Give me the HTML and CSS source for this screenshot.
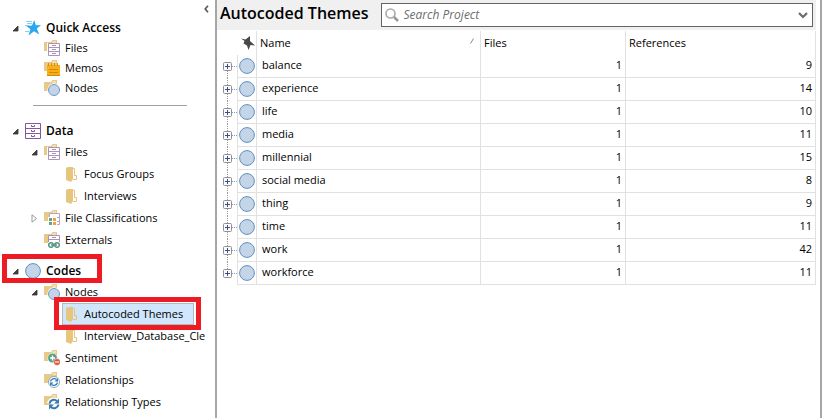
FILE: index.html
```
<!DOCTYPE html>
<html lang="en">
<head>
<meta charset="utf-8">
<title>Autocoded Themes</title>
<link rel="stylesheet" href="styles.css">
</head>
<body>
<svg class="symbols" aria-hidden="true">
  <symbol id="open" viewBox="0 0 7 7"><path d="M6 1V6H1Z" fill="#404040" stroke="#333" stroke-width=".8"/></symbol>
  <symbol id="closed" viewBox="0 0 7 9"><path d="M1 .8V8.2L5.5 4.5Z" fill="#fff" stroke="#999"/></symbol>
  <symbol id="star" viewBox="0 0 16 16"><path d="M9.2 0L10.8 5.2L16 5L11.8 8.6L14.2 14.5L9 11.2L3.5 15.5L5.4 9.2L1.5 6L7 5.4Z" fill="#29a8ef"/><path d="M1 1.5H7M2 3.5H7M0 5.5H4M0 11.5H4" stroke="#8bcdf3"/></symbol>
  <symbol id="back" viewBox="0 0 16 16"><path d="M0 2H7L8.500 0H13V11H0Z" fill="#e9c987"/><path d="M8.500 2H12" stroke="#fff5df"/></symbol>
  <symbol id="files" viewBox="0 0 16 16"><use href="#back"/><path d="M3 3H5V16H3Z" fill="#fff"/><path d="M4.500 3.500H15.500V15.500H4.500ZM4.500 7.500H15.500M4.500 11.500H15.500" fill="#fff" stroke="#a992b9"/><path d="M8 5.500H12M8 9.500H12M8 13.500H12" stroke="#a992b9"/></symbol>
  <symbol id="memos" viewBox="0 0 16 16"><use href="#back"/><path d="M3 5H16V15.500H3Z" fill="#f9ad16"/><path d="M4.500 3V6M7.500 3V6M10.500 3V6M13.500 3V6" stroke="#d98c05"/><path d="M5 9.500H14M5 12.500H14M3 15.500H16" stroke="#cf8a08"/></symbol>
  <symbol id="nodes" viewBox="0 0 16 16"><use href="#back"/><circle cx="10" cy="10" r="6.700" fill="#fff"/><circle cx="10" cy="10" r="5.500" fill="#c5d5e8" stroke="#6e9bc7"/></symbol>
  <symbol id="data" viewBox="0 0 16 16"><path d="M.5 .5H15.500V15.500H.5ZM.5 5.500H15.500M.5 10.500H15.500" fill="#fff" stroke="#8158a0"/><path d="M6.500 2V3.500H9.500V2M6.500 7V8.500H9.500V7M6.500 12V13.500H9.500V12" fill="none" stroke="#8158a0"/></symbol>
  <symbol id="folder" viewBox="0 0 16 16"><path d="M3 2L5 1H10V13L8 16L3 14Z" fill="#e8c57d"/><path d="M10 2.500H11.500V9M11 9.500H13.500V13.500H10" fill="none" stroke="#e8c57d"/></symbol>
  <symbol id="classes" viewBox="0 0 16 16"><use href="#back"/><path d="M5.500 3.500H15.500V14.500H5.500ZM10 7.500H15M10 11.500H15" fill="#fff" stroke="#b8a5c5"/><path d="M4 7H13V16H4Z" fill="#fff"/><path d="M5 8H8V11H5ZM5 12H8V15H5Z" fill="#62a28f"/><path d="M9 8H12V11H9ZM9 12H12V15H9Z" fill="#f1a33b"/></symbol>
  <symbol id="externals" viewBox="0 0 16 16"><use href="#back"/><path d="M4.500 3.500H15.500V11H4.500ZM4.500 7.500H15.500M8 5.500H12" fill="#fff" stroke="#a992b9"/><path d="M4 10H16V16H4Z" fill="#fff"/><circle cx="7" cy="13" r="2.300" fill="none" stroke="#58977f" stroke-width="1.500"/><circle cx="13" cy="13" r="2.300" fill="none" stroke="#58977f" stroke-width="1.500"/><path d="M7 13H13" stroke="#58977f" stroke-width="1.500"/></symbol>
  <symbol id="sentiment" viewBox="0 0 16 16"><use href="#back"/><circle cx="8.500" cy="8" r="4.800" fill="#58a08a" stroke="#fff" stroke-width=".6"/><path d="M6 8H11M8.500 5.500V10.500" stroke="#fff" stroke-width="1.400"/><circle cx="13" cy="12" r="3.400" fill="#dc5038" stroke="#fff" stroke-width=".6"/><path d="M11 12H15" stroke="#fff" stroke-width="1.200"/></symbol>
  <symbol id="arrows" viewBox="0 0 16 16"><path d="M6.500 9.500A3.700 3.700 0 0 1 12.500 7.500M13.500 10.500A3.700 3.700 0 0 1 7.500 12.500" fill="none" stroke="#3979b5" stroke-width="1.300"/><path d="M14 6V9.500H10.500ZM6 14V10.500H9.500Z" fill="#3979b5"/></symbol>
  <symbol id="relationships" viewBox="0 0 16 16"><use href="#back"/><circle cx="10" cy="10" r="5.500" fill="#fff" stroke="#85a9cd"/><use href="#arrows"/></symbol>
  <symbol id="reltypes" viewBox="0 0 16 16"><use href="#back"/><circle cx="10" cy="10" r="2.800" fill="#fff"/><path d="M5 9.500A5 5 0 0 1 13.500 7M15 10.500A5 5 0 0 1 6.500 13" fill="none" stroke="#fff" stroke-width="4"/><path d="M5.500 9.500A4.500 4.500 0 0 1 13 7M14.500 10.500A4.500 4.500 0 0 1 7 13" fill="none" stroke="#3979b5" stroke-width="2"/><path d="M15 4.500V9.500H10ZM5 15.500V10.500H10Z" fill="#3979b5"/></symbol>
  <symbol id="code" viewBox="0 0 16 16"><circle cx="8" cy="8" r="7.400" fill="#c5d5e8" stroke="#5e90c0"/></symbol>
  <symbol id="plus" viewBox="0 0 9 9"><rect x=".5" y=".5" width="8" height="8" rx="1" fill="#fafafa" stroke="#8f8f8f"/><path d="M2 4.500H7M4.500 2V7" stroke="#33509b"/></symbol>
</svg>
<div class="app">
  <nav class="sidebar" aria-label="Project">
    <button class="collapse" aria-label="Collapse"><svg viewBox="0 0 5 8"><path d="M4 .8L1.200 4L4 7.200" fill="none" stroke="#555" stroke-width="1.600"/></svg></button>
    <section class="group quick">
      <div class="row top"><button class="toggle" aria-label="Toggle Quick Access"><svg><use href="#open"/></svg></button><a href="#"><svg><use href="#star"/></svg><span>Quick Access</span></a></div>
      <div class="row child"><a href="#"><svg><use href="#files"/></svg><span>Files</span></a></div>
      <div class="row child"><a href="#"><svg><use href="#memos"/></svg><span>Memos</span></a></div>
      <div class="row child"><a href="#"><svg><use href="#nodes"/></svg><span>Nodes</span></a></div>
    </section>
    <hr>
    <section class="group">
      <div class="row top"><button class="toggle" aria-label="Toggle Data"><svg><use href="#open"/></svg></button><a href="#"><svg><use href="#data"/></svg><span>Data</span></a></div>
      <div class="row child"><button class="toggle" aria-label="Toggle Files"><svg><use href="#open"/></svg></button><a href="#"><svg><use href="#files"/></svg><span>Files</span></a></div>
      <div class="row leaf"><a href="#"><svg><use href="#folder"/></svg><span>Focus Groups</span></a></div>
      <div class="row leaf"><a href="#"><svg><use href="#folder"/></svg><span>Interviews</span></a></div>
      <div class="row child"><button class="toggle shut" aria-label="Toggle File Classifications"><svg><use href="#closed"/></svg></button><a href="#"><svg><use href="#classes"/></svg><span>File Classifications</span></a></div>
      <div class="row child"><a href="#"><svg><use href="#externals"/></svg><span>Externals</span></a></div>
    </section>
    <section class="group">
      <div class="row top marked"><button class="toggle" aria-label="Toggle Codes"><svg><use href="#open"/></svg></button><a href="#"><svg><use href="#code"/></svg><span>Codes</span></a></div>
      <div class="row child"><button class="toggle" aria-label="Toggle Nodes"><svg><use href="#open"/></svg></button><a href="#"><svg><use href="#nodes"/></svg><span>Nodes</span></a></div>
      <div class="row leaf marked"><a href="#" class="selected" aria-current="page"><svg><use href="#folder"/></svg><span>Autocoded Themes</span></a></div>
      <div class="row leaf"><a href="#"><svg><use href="#folder"/></svg><span>Interview_Database_Cle</span></a></div>
      <div class="row child"><a href="#"><svg><use href="#sentiment"/></svg><span>Sentiment</span></a></div>
      <div class="row child"><a href="#"><svg><use href="#relationships"/></svg><span>Relationships</span></a></div>
      <div class="row child"><a href="#"><svg><use href="#reltypes"/></svg><span>Relationship Types</span></a></div>
    </section>
  </nav>
  <main>
    <header>
      <h1>Autocoded Themes</h1>
      <div class="search">
        <svg class="lens" viewBox="0 0 14 14"><circle cx="5.500" cy="5.500" r="4.500" fill="#fff" stroke="#aaa" stroke-width="1.600"/><path d="M9 9L13 13" stroke="#999" stroke-width="2.500"/></svg>
        <input type="text" placeholder="Search Project" aria-label="Search Project">
        <button aria-label="Search options"><svg viewBox="0 0 10 7"><path d="M1 1L5 5L9 1" fill="none" stroke="#6b6b6b" stroke-width="2.200"/></svg></button>
      </div>
    </header>
    <table>
      <colgroup><col class="c-toggle"><col class="c-icon"><col><col class="c-files"><col class="c-refs"></colgroup>
      <thead><tr><td></td><td class="pin"><svg viewBox="0 0 14 14"><path d="M0 2.500L4.500 3.500L9 0L9 5L14 9.500L9.500 9L7.500 14L6 9.500L2.500 7.500L3.500 5Z" fill="#484848"/></svg></td><th>Name<svg class="sort" viewBox="0 0 4 6"><path d="M.5 5.500L3.500 .5" stroke="#888"/></svg></th><th>Files</th><th>References</th></tr></thead>
      <tbody>
        <tr><td><button aria-label="Expand balance"><svg><use href="#plus"/></svg></button></td><td><svg><use href="#code"/></svg></td><td>balance</td><td>1</td><td>9</td></tr>
        <tr><td><button aria-label="Expand experience"><svg><use href="#plus"/></svg></button></td><td><svg><use href="#code"/></svg></td><td>experience</td><td>1</td><td>14</td></tr>
        <tr><td><button aria-label="Expand life"><svg><use href="#plus"/></svg></button></td><td><svg><use href="#code"/></svg></td><td>life</td><td>1</td><td>10</td></tr>
        <tr><td><button aria-label="Expand media"><svg><use href="#plus"/></svg></button></td><td><svg><use href="#code"/></svg></td><td>media</td><td>1</td><td>11</td></tr>
        <tr><td><button aria-label="Expand millennial"><svg><use href="#plus"/></svg></button></td><td><svg><use href="#code"/></svg></td><td>millennial</td><td>1</td><td>15</td></tr>
        <tr><td><button aria-label="Expand social media"><svg><use href="#plus"/></svg></button></td><td><svg><use href="#code"/></svg></td><td>social media</td><td>1</td><td>8</td></tr>
        <tr><td><button aria-label="Expand thing"><svg><use href="#plus"/></svg></button></td><td><svg><use href="#code"/></svg></td><td>thing</td><td>1</td><td>9</td></tr>
        <tr><td><button aria-label="Expand time"><svg><use href="#plus"/></svg></button></td><td><svg><use href="#code"/></svg></td><td>time</td><td>1</td><td>11</td></tr>
        <tr><td><button aria-label="Expand work"><svg><use href="#plus"/></svg></button></td><td><svg><use href="#code"/></svg></td><td>work</td><td>1</td><td>42</td></tr>
        <tr><td><button aria-label="Expand workforce"><svg><use href="#plus"/></svg></button></td><td><svg><use href="#code"/></svg></td><td>workforce</td><td>1</td><td>11</td></tr>
      </tbody>
    </table>
  </main>
</div>
</body>
</html>
```
FILE: styles.css
```
*, *::after { box-sizing: border-box; }
body { margin: 0; background: #fff; color: #000; font: 12px/20px "Open Sans", "Noto Sans", sans-serif; }
button { padding: 0; border: 0; background: none; }
svg { display: block; }
.symbols { position: absolute; width: 0; height: 0; }

.app { display: flex; min-height: 100vh; padding-right: 1px; }

/* Navigation tree */
.sidebar { position: relative; flex: 0 0 217px; padding: 18px 8px 0 0; border-right: 2px solid #a6a6a6; font-size: 11px; }
.collapse { position: absolute; top: 5px; right: 6px; }
.collapse svg { width: 5px; height: 8px; }
.row { position: relative; display: flex; align-items: center; height: 22px; padding-left: 12px; }
.row.top, .quick .row { height: 20px; }
.row.top { font-size: 12px; font-weight: 600; }
.row.child { padding-left: 31px; }
.row.leaf { padding-left: 50px; }
.row a { display: flex; align-items: center; gap: 5px; min-width: 0; height: 20px; margin-left: 13px; color: inherit; text-decoration: none; white-space: nowrap; }
.row a span { overflow: hidden; }
.row a svg { flex: none; width: 16px; height: 16px; }
.toggle { flex: none; width: 7px; margin-right: -7px; }
.toggle svg { width: 7px; height: 7px; }
.toggle.shut svg { height: 9px; }
.row a.selected { padding-right: 10px; background: #cfe6fc; box-shadow: 0 0 0 1px #b4b8bc; }
.sidebar hr { height: 1px; margin: 7px 20px 15px 33px; border: 0; background: #a0a0a0; }
.group + .group { margin-top: 10px; }
.marked::after { content: ""; position: absolute; z-index: 1; border: 5px solid #ed1c24; pointer-events: none; }
.top.marked::after { left: 2px; top: -7px; width: 100px; height: 29px; }
.leaf.marked::after { left: 54px; top: -6px; width: 147px; height: 33px; }

/* Results */
main { flex: 1; min-width: 0; padding-right: 4px; border-right: 2px solid #a6a6a6; }
header { display: flex; align-items: center; gap: 12px; height: 30px; padding: 0 3px 0 3px; background: #f0f0f0; }
h1 { margin: 0; padding-bottom: 4px; font-size: 16px; line-height: 24px; font-weight: 600; white-space: nowrap; }
.search { display: flex; flex: 1; align-items: center; height: 24px; padding: 0 4px 0 3px; border: 1px solid #646464; background: #fff; }
.lens { width: 14px; height: 14px; }
.search input { flex: 1; min-width: 0; height: 20px; padding: 0 0 0 5px; border: 0; outline: 0; background: none; font: italic 12px/20px "Open Sans", sans-serif; }
.search input::placeholder { color: #6d6d6d; opacity: 1; }
.search button svg { width: 10px; height: 7px; }

table { width: 100%; margin-top: 1px; table-layout: fixed; border-collapse: separate; border-spacing: 0; font-size: 11px; line-height: 18px; }
.c-toggle { width: 21px; }
.c-icon { width: 19px; }
.c-files { width: 145px; }
.c-refs { width: 190px; }
td, th { height: 23px; padding: 0 3px; border-right: 1px solid #e1e1e1; font-weight: 400; text-align: left; vertical-align: middle; }
thead td { border-right-color: #e1e1e1; }
thead td:first-child { border-right: 0; }
thead td, thead th { height: 24px; }
.pin { padding: 0 0 0 3px; }
.pin svg { width: 14px; height: 14px; }
.sort { float: right; width: 4px; height: 6px; margin: 4px 3px 0 0; }
tbody td { padding: 0 3px 2px 5px; border-bottom: 1px solid #e1e1e1; }
/* Dotted connector lines between the expanders */
tbody td:first-child { padding: 0 0 0 6px; border-bottom: 0; background: repeating-linear-gradient(#999 0 1px, transparent 1px 2px) 10px 0 / 1px 100% no-repeat, repeating-linear-gradient(90deg, #999 0 1px, transparent 1px 2px) 15px 11px / 5px 1px no-repeat; }
tbody tr:first-child td:first-child { background-position: 10px 12px, 15px 11px; }
tbody tr:last-child td:first-child { background-size: 1px 12px, 5px 1px; }
tbody td:nth-child(2) { padding: 0 1px; }
tbody td:nth-child(n+4) { text-align: right; }
tbody button, tbody button svg { display: block; width: 9px; height: 9px; }
tbody td:nth-child(2) svg { width: 16px; height: 16px; }
```
